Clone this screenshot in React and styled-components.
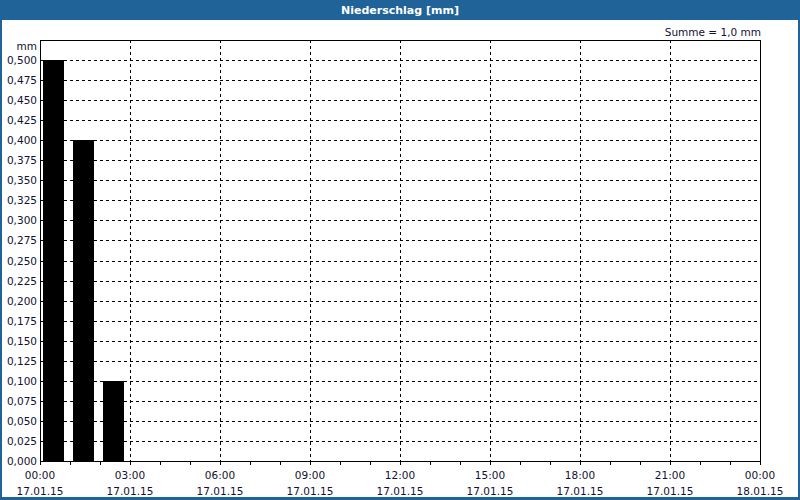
import React from "react";
import styled, { createGlobalStyle } from "styled-components";

const Global = createGlobalStyle`
  html, body { margin: 0; padding: 0; background: #fff; }
  body { font-family: "DejaVu Sans", "Liberation Sans", sans-serif; }
`;
const Frame = styled.div`
  width: 800px; height: 500px; box-sizing: border-box;
  display: flex; flex-direction: column;
  background: #1f6398; padding: 0 2px 3px 2px;
`;
const Header = styled.div`
  height: 20px; display: flex; align-items: center; justify-content: center;
  color: #fff; font-weight: bold; font-size: 11px;
`;
const Body = styled.div`
  flex: 1; background: #fff; display: flex;
`;
const Chart = styled.svg`
  display: block; width: 796px; height: 477px;
  font-family: "DejaVu Sans", "Liberation Sans", sans-serif; font-size: 10.5px;
`;

const L = 40, R = 760, T = 40, B = 461;
const yOf = (v) => B - (v / 0.5) * (B - 60);
const yTicks = Array.from({ length: 21 }, (_, i) => i * 0.025);
const xLabels = [
  ["00:00", "17.01.15"], ["03:00", "17.01.15"], ["06:00", "17.01.15"],
  ["09:00", "17.01.15"], ["12:00", "17.01.15"], ["15:00", "17.01.15"],
  ["18:00", "17.01.15"], ["21:00", "17.01.15"], ["00:00", "18.01.15"],
];
const bars = [[43, 0.5], [73, 0.4], [103, 0.1]];

export default function App() {
  return (
    <>
      <Global />
      <Frame>
        <Header>Niederschlag [mm]</Header>
        <Body>
          <Chart viewBox="2 20 796 477">
            <text x={761} y={36} textAnchor="end" fill="#111133">Summe = 1,0 mm</text>
            <text x={37} y={50} textAnchor="end" fill="#111133">mm</text>
            {yTicks.map((v, i) => (
              <g key={i}>
                {i > 0 && <line x1={L} x2={R} y1={Math.round(yOf(v)) + 0.5} y2={Math.round(yOf(v)) + 0.5} stroke="#000" strokeDasharray="3 3" />}
                <text x={37} y={Math.round(yOf(v)) + 4} textAnchor="end" fill="#111133">{v.toFixed(3).replace(".", ",")}</text>
              </g>
            ))}
            {xLabels.map((_, i) => i > 0 && i < 8 && (
              <line key={i} x1={L + i * 90 + 0.5} x2={L + i * 90 + 0.5} y1={T} y2={B} stroke="#000" strokeDasharray="3 3" />
            ))}
            {Array.from({ length: 25 }, (_, i) => (
              <line key={i} x1={L + i * 30 + 0.5} x2={L + i * 30 + 0.5} y1={B} y2={B + 4} stroke="#000" />
            ))}
            {bars.map(([x, v], i) => (
              <rect key={i} x={x} y={Math.round(yOf(v))} width={21} height={B - Math.round(yOf(v))} fill="#000" />
            ))}
            <rect x={L + 0.5} y={T + 0.5} width={R - L} height={B - T} fill="none" stroke="#000" />
            {xLabels.map(([a, b], i) => (
              <g key={i} fill="#111133" textAnchor="middle">
                <text x={L + i * 90} y={479}>{a}</text>
                <text x={L + i * 90} y={495}>{b}</text>
              </g>
            ))}
          </Chart>
        </Body>
      </Frame>
    </>
  );
}
